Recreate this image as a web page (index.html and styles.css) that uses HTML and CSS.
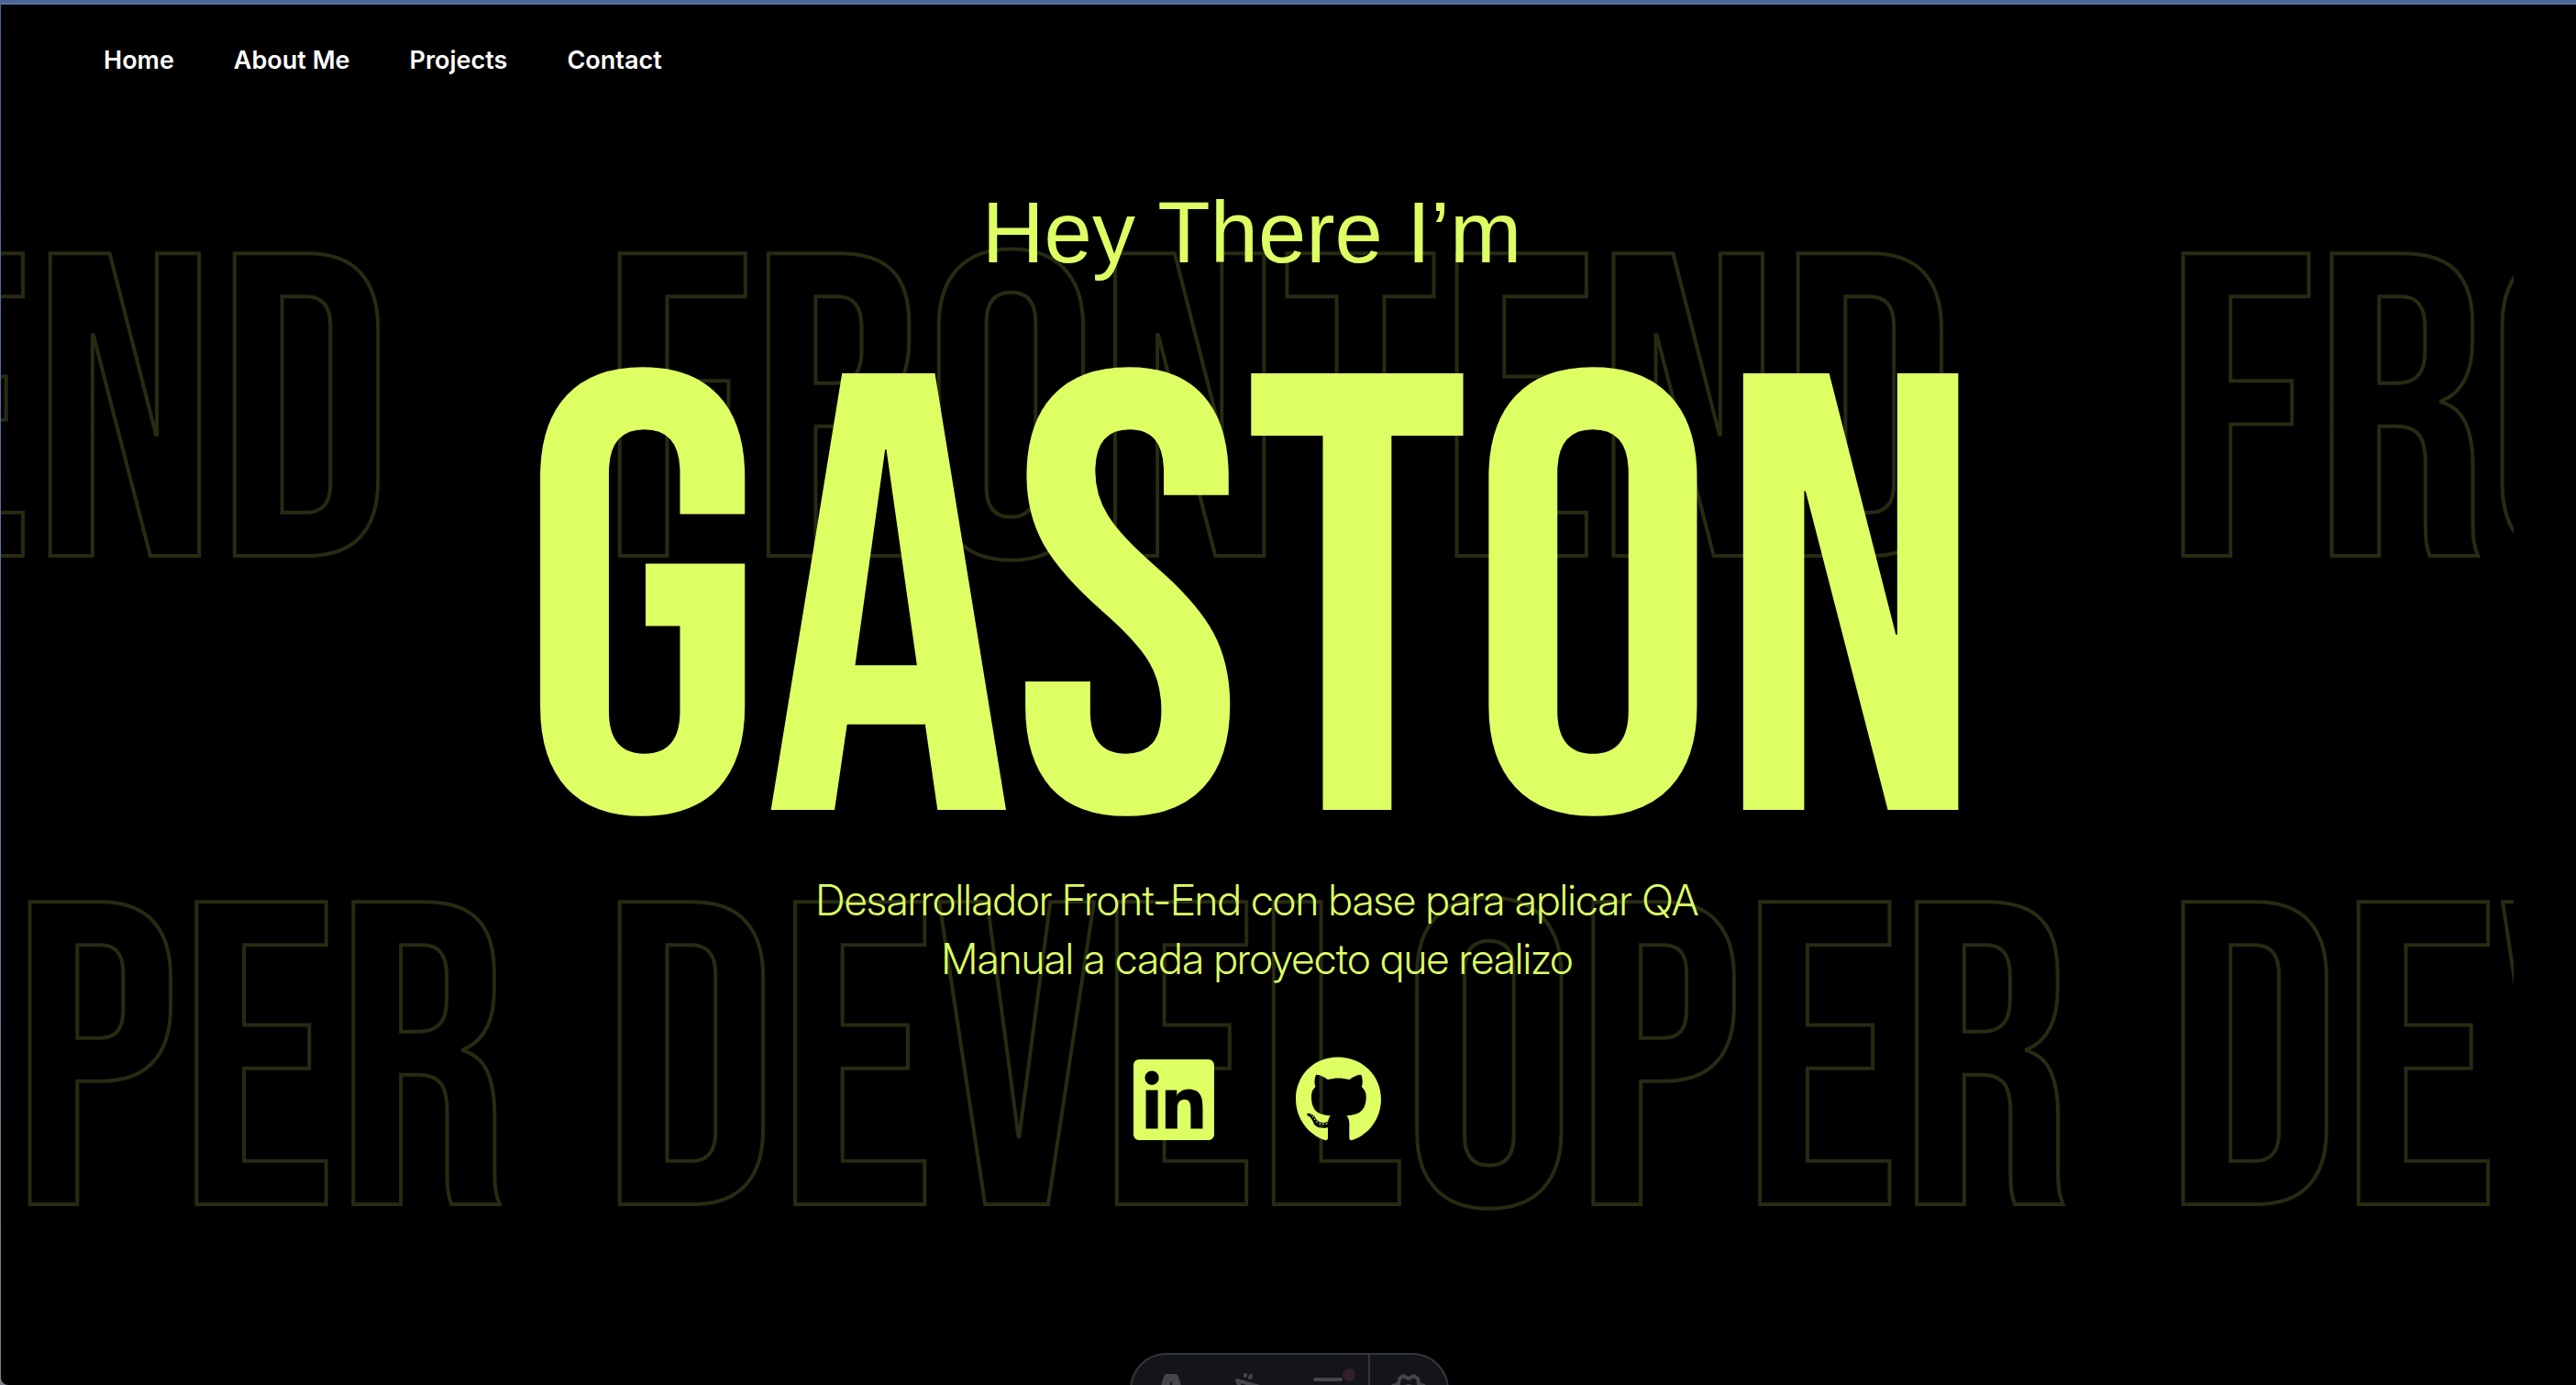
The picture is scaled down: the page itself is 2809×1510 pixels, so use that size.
FILE: index.html
```html
<!DOCTYPE html>
<html lang="es">
<head>
<meta charset="utf-8">
<meta name="viewport" content="width=device-width, initial-scale=1">
<title>Gaston</title>
<link rel="stylesheet" href="styles.css">
</head>
<body>
<div class="page">
  <header class="site-header">
    <nav class="site-nav">
      <a href="#home">Home</a>
      <a href="#about">About Me</a>
      <a href="#projects">Projects</a>
      <a href="#contact">Contact</a>
    </nav>
  </header>

  <div class="backdrop" aria-hidden="true">
    <div class="marquee"><span>FRONTEND</span><span>FRONTEND</span><span>FRONTEND</span></div>
    <div class="marquee"><span>DEVELOPER</span><span>DEVELOPER</span><span>DEVELOPER</span></div>
  </div>

  <main class="hero" id="home">
    <p class="greeting">Hey There I’m</p>
    <h1 class="name">GASTON</h1>
    <p class="intro">Desarrollador Front-End con base para aplicar QA Manual a cada proyecto que realizo</p>
    <div class="social">
      <a href="#linkedin" aria-label="LinkedIn">
        <svg class="icon-linkedin" viewBox="0 32 448 448"><path d="M416 32H31.9C14.3 32 0 46.5 0 64.3v383.4C0 465.5 14.3 480 31.9 480H416c17.6 0 32-14.5 32-32.3V64.3c0-17.8-14.4-32.3-32-32.3zM135.4 416H69V202.2h66.5V416zm-33.2-243c-21.3 0-38.5-17.3-38.5-38.5S80.9 96 102.2 96c21.2 0 38.5 17.3 38.5 38.5 0 21.3-17.2 38.5-38.5 38.5zm282.1 243h-66.4V312c0-24.8-.5-56.7-34.5-56.7-34.6 0-39.9 27-39.9 54.9V416h-66.4V202.2h63.7v29.2h.9c8.9-16.8 30.6-34.5 62.9-34.5 67.2 0 79.7 44.3 79.7 101.9V416z"/></svg>
      </a>
      <a href="#github" aria-label="GitHub">
        <svg class="icon-github" viewBox="0 0 496 512"><path d="M165.900 397.400c0 2-2.300 3.600-5.200 3.600-3.300.3-5.600-1.300-5.600-3.600 0-2 2.300-3.600 5.200-3.600 3-.3 5.600 1.300 5.600 3.600zm-31.100-4.500c-.7 2 1.300 4.300 4.300 4.900 2.600 1 5.600 0 6.200-2s-1.300-4.300-4.300-5.200c-2.600-.7-5.500.3-6.200 2.300zm44.200-1.700c-2.900.7-4.900 2.600-4.600 4.900.3 2 2.900 3.300 5.900 2.600 2.900-.7 4.900-2.600 4.600-4.600-.3-1.900-3-3.200-5.900-2.900zM244.800 8C106.100 8 0 113.300 0 252c0 110.900 69.800 205.800 169.500 239.200 12.800 2.300 17.300-5.600 17.300-12.100 0-6.200-.3-40.400-.3-61.400 0 0-70 15-84.700-29.800 0 0-11.400-29.100-27.800-36.600 0 0-22.900-15.700 1.600-15.400 0 0 24.900 2 38.600 25.800 21.900 38.600 58.600 27.500 72.900 20.900 2.300-16 8.800-27.100 16-33.700-55.900-6.200-112.300-14.300-112.300-110.500 0-27.500 7.600-41.300 23.600-58.900-2.600-6.500-11.100-33.300 2.600-67.900 20.900-6.500 69 27 69 27 20-5.600 41.500-8.500 62.800-8.500s42.800 2.900 62.800 8.500c0 0 48.100-33.600 69-27 13.700 34.700 5.200 61.400 2.600 67.900 16 17.700 25.800 31.500 25.800 58.900 0 96.500-58.900 104.200-114.800 110.500 9.200 7.900 17 22.900 17 46.400 0 33.700-.3 75.400-.3 83.600 0 6.500 4.600 14.400 17.300 12.100C428.200 457.800 496 362.900 496 252 496 113.300 383.500 8 244.800 8zM97.200 352.900c-1.300 1-1 3.300.7 5.200 1.600 1.600 3.900 2.300 5.200 1 1.300-1 1-3.300-.7-5.200-1.600-1.600-3.900-2.300-5.200-1zm-10.800-8.100c-.7 1.300.3 2.900 2.300 3.900 1.600 1 3.600.7 4.300-.7.7-1.300-.3-2.900-2.300-3.900-2-.6-3.600-.3-4.300.7zm32.400 35.600c-1.600 1.300-1 4.300 1.300 6.200 2.300 2.300 5.200 2.600 6.500 1 1.300-1.300.7-4.300-1.300-6.200-2.200-2.300-5.200-2.600-6.500-1zm-11.400-14.700c-1.600 1-1.600 3.600 0 5.900 1.600 2.300 4.300 3.300 5.600 2.300 1.600-1.300 1.600-3.900 0-6.200-1.400-2.300-4-3.300-5.600-2z"/></svg>
      </a>
    </div>
  </main>
</div>

<div class="dev-toolbar">
  <button type="button" aria-label="Menu"><svg viewBox="0 0 48 48"><path fill="currentColor" d="M16 11q1-3 3-3h10q2 0 3 3l9 29H31l-3-14h-8l-3 14H7z"/><path fill="#131519" d="M24 15l3 11h-6z"/></svg></button>
  <button type="button" aria-label="Inspect"><svg viewBox="0 0 48 48" fill="none" stroke="currentColor" stroke-width="4" stroke-linejoin="round" stroke-linecap="round"><path d="M10 15l28 8-12 5-5 12z"/><path d="M19 9v1M25 10l-1 2"/></svg></button>
  <button type="button" aria-label="Audit"><svg viewBox="0 0 48 48" fill="none" stroke="currentColor" stroke-width="4" stroke-linecap="round"><path d="M9 14h28M9 26h30M9 38h30"/></svg><span class="dot"></span></button>
  <button type="button" aria-label="Settings" class="settings"><svg viewBox="0 0 48 48" fill="none" stroke="currentColor" stroke-width="4" stroke-linejoin="round"><path d="M18 10l6 3 6-3 4 3 1 6 6 2 2 5-4 4 4 4-2 5-6 1-1 6H14l-1-6-6-1-2-5 4-4-4-4 2-5 6-2 1-6z"/><circle cx="24" cy="28" r="7"/></svg></button>
</div>
</body>
</html>
```
FILE: styles.css
```css
:root {
  --lime: #ddff64;
  --outline: #272b12;
}

* {
  box-sizing: border-box;
}

html {
  background: #7c808c;
}

body {
  margin: 0;
  min-height: 100vh;
  display: flex;
  flex-direction: column;
  overflow: hidden;
  background: linear-gradient(#4b6395, #5f739c 40%, #7c808c);
  font-family: Inter, "Liberation Sans", sans-serif;
}

.page {
  position: relative;
  flex: 1;
  margin-left: 1px;
  padding-right: 68px;
  border-top: 5px solid #4b6395;
  border-bottom-left-radius: 8px;
  background: #000;
}

.page::before {
  content: "";
  position: absolute;
  top: -2px;
  left: 0;
  right: 0;
  height: 2px;
  background: #5f76a3;
}

.site-header {
  padding: 41px 112px 32px;
}

.site-nav {
  display: flex;
  gap: 65px;
}

.site-nav a {
  color: #fff;
  font-size: 27px;
  font-weight: 600;
  line-height: 40px;
  text-decoration: none;
}

.backdrop {
  position: absolute;
  top: 224px;
  left: 0;
  right: 68px;
  display: flex;
  flex-direction: column;
  gap: 235px;
  overflow: hidden;
}

.marquee {
  display: flex;
  margin-left: -38.3%;
  width: 100%;
}

.marquee span {
  flex: 0 0 62.22%;
  font-family: "Bebas Neue", sans-serif;
  font-size: 471px;
  line-height: 472px;
  white-space: nowrap;
  color: transparent;
  -webkit-text-stroke: 4px var(--outline);
}

.hero {
  position: relative;
  display: flex;
  flex-direction: column;
  align-items: center;
  padding-top: 80px;
  color: var(--lime);
  text-align: center;
}

.greeting,
.name {
  margin: 0 12px 0 0;
  font-weight: 400;
}

.greeting {
  font-family: "Liberation Sans", sans-serif;
  font-size: 94px;
  line-height: 112px;
}

.name {
  margin-top: 99px;
  font-family: "Bebas Neue", sans-serif;
  font-size: 680px;
  line-height: 540px;
}

.intro {
  margin: 0;
  max-width: 1000px;
  font-family: "Inter Display", Inter, sans-serif;
  font-size: 46px;
  font-weight: 300;
  line-height: 64px;
}

.social {
  display: flex;
  align-items: center;
  gap: 89px;
  margin-top: 74px;
}

.social a {
  display: flex;
  color: inherit;
}

.social svg {
  fill: currentColor;
}

.icon-linkedin {
  width: 88px;
  height: 88px;
}

.icon-github {
  width: 93px;
  height: 96px;
}

.dev-toolbar {
  position: fixed;
  left: 50%;
  bottom: -45px;
  display: flex;
  height: 80px;
  margin-left: -173px;
  border: 2px solid #34363f;
  border-radius: 40px;
  overflow: hidden;
  background: #131519;
}

.dev-toolbar button {
  position: relative;
  width: 86px;
  padding: 12px 0;
  border: 0;
  background: none;
  color: #45464a;
}

.dev-toolbar svg {
  width: 48px;
  height: 48px;
}

.dev-toolbar .settings {
  border-left: 2px solid #34363f;
}

.dev-toolbar .dot {
  position: absolute;
  top: 15px;
  right: 14px;
  width: 14px;
  height: 14px;
  border-radius: 50%;
  background: #331f29;
}
```
